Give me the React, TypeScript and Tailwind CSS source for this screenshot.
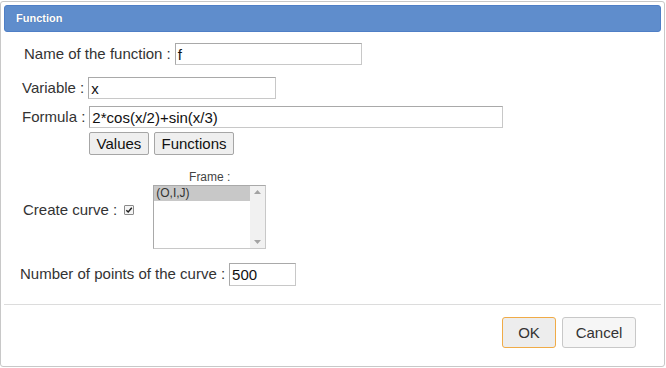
import React from "react";

function Input({ value, w }: { value: string; w: string }) {
  return (
    <div
      className={`${w} h-[22px] border border-[#a9a9a9] border-b-[#c8c8c8] border-r-[#c8c8c8] bg-white flex items-center pl-[2px] text-[15px] text-[#111] leading-none`}
    >
      {value}
    </div>
  );
}

export default function App() {
  return (
    <div className="w-[666px] h-[368px] bg-white overflow-hidden font-['Liberation_Sans',Arial,sans-serif] text-[#333]">
      <div className="mt-[1px] w-[665px] h-[366px] border border-[#c8c8c8] rounded-[3px] bg-white p-[3px] flex flex-col">
        <div className="h-[27px] shrink-0 bg-[#5f8dcc] border border-[#4f7fc6] rounded-[3px] flex items-center pl-[11px] text-white font-bold text-[11px] [text-shadow:0_0_1px_rgba(0,0,0,0.25)]">
          Function
        </div>

        <div className="mt-[11px] h-[22px] flex items-center pl-[20px]">
          <span className="text-[15px] mr-[4px]">Name of the function :</span>
          <Input value="f" w="w-[187px]" />
        </div>

        <div className="mt-[12px] h-[22px] flex items-center pl-[18px]">
          <span className="text-[15px] mr-[4px]">Variable :</span>
          <Input value="x" w="w-[188px]" />
        </div>

        <div className="mt-[7px] h-[22px] flex items-center pl-[18px]">
          <span className="text-[15px] mr-[4px]">Formula :</span>
          <Input value="2*cos(x/2)+sin(x/3)" w="w-[414px]" />
        </div>

        <div className="mt-[4px] h-[23px] flex items-center pl-[85px] gap-[5px]">
          <button className="w-[60px] h-[23px] bg-[#efefef] border border-[#a6a6a6] rounded-[2px] text-[15px] text-[#111] leading-none">
            Values
          </button>
          <button className="w-[80px] h-[23px] bg-[#efefef] border border-[#a6a6a6] rounded-[2px] text-[15px] text-[#111] leading-none">
            Functions
          </button>
        </div>

        <div className="mt-[16px] flex items-center pl-[19px]">
          <span className="text-[15px]">Create curve :</span>
          <span className="ml-[7px] w-[10px] h-[10px] border border-[#8a8a8a] rounded-[1px] bg-[#f4f4f4] flex items-center justify-center">
            <svg width="8" height="8" viewBox="0 0 8 8">
              <path d="M1.3 4.2 L3.2 6 L6.8 1.8" fill="none" stroke="#222" strokeWidth="1.5" />
            </svg>
          </span>
          <div className="ml-[19px] flex flex-col items-center w-[113px]">
            <span className="text-[12px] leading-[13px] h-[13px] text-[#444]">Frame :</span>
            <div className="mt-[1px] w-[113px] h-[64px] border border-[#a9a9a9] border-b-[#c8c8c8] border-r-[#c8c8c8] bg-white flex">
              <div className="flex-1">
                <div className="h-[15px] bg-[#c8c8c8] text-[12px] leading-[14px] pl-[2px] text-[#333]">(O,I,J)</div>
              </div>
              <div className="w-[15px] bg-[#f1f1f1] flex flex-col justify-between items-center py-[4px]">
                <svg width="7" height="4" viewBox="0 0 7 4">
                  <path d="M0 4 L3.5 0 L7 4 Z" fill="#a3a3a3" />
                </svg>
                <svg width="7" height="4" viewBox="0 0 7 4">
                  <path d="M0 0 L3.5 4 L7 0 Z" fill="#a3a3a3" />
                </svg>
              </div>
            </div>
          </div>
        </div>

        <div className="mt-[14px] h-[23px] flex items-center pl-[16px]">
          <span className="text-[15px] mr-[4px]">Number of points of the curve :</span>
          <Input value="500" w="w-[67px] h-[23px]" />
        </div>

        <div className="mt-[18px] h-px bg-[#dcdcdc] shrink-0" />

        <div className="mt-[12px] flex justify-end gap-[6px] pr-[25px]">
          <button className="w-[54px] h-[31px] bg-[#ededed] border border-[#f0ab47] rounded-[3px] text-[15px] text-[#333] leading-none">
            OK
          </button>
          <button className="w-[74px] h-[31px] bg-[#f6f6f6] border border-[#c8c8c8] rounded-[3px] text-[15px] text-[#333] leading-none">
            Cancel
          </button>
        </div>
      </div>
    </div>
  );
}
